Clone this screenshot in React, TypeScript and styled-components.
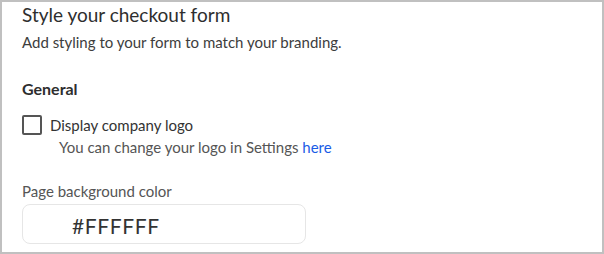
import { createGlobalStyle } from "styled-components";
import styled from "styled-components";

const GlobalStyle = createGlobalStyle`
  html, body {
    margin: 0;
    padding: 0;
    background: #ffffff;
  }
  body {
    font-family: Lato, "Noto Sans", sans-serif;
    color: #333333;
  }
`;

const Panel = styled.section`
  box-sizing: border-box;
  width: 604px;
  height: 254px;
  border: 2px solid #c0c0c0;
  padding: 1px 20px 0;
  background: #ffffff;
  overflow: hidden;
`;

const Title = styled.h1`
  margin: 0;
  font-size: 19px;
  line-height: 24px;
  font-weight: 400;
  color: #2e2e2e;
`;

const Subtitle = styled.p`
  margin: 6px 0 0;
  font-size: 15px;
  line-height: 18px;
  color: #3d3d3d;
`;

const SectionHeading = styled.h2`
  margin: 28px 0 0;
  font-size: 16px;
  line-height: 20px;
  font-weight: 700;
  color: #2e2e2e;
`;

const CheckRow = styled.label`
  display: flex;
  align-items: center;
  gap: 8px;
  margin-top: 16px;
  font-size: 15px;
  line-height: 20px;
  color: #333333;
  cursor: pointer;
`;

const Box = styled.span`
  box-sizing: border-box;
  width: 20px;
  height: 20px;
  border: 2px solid #555555;
  border-radius: 2px;
  flex: none;
`;

const Hint = styled.p`
  margin: 2px 0 0 37px;
  font-size: 15px;
  line-height: 20px;
  color: #555555;
`;

const Link = styled.a`
  color: #1a5ce6;
  text-decoration: none;
`;

const FieldLabel = styled.div`
  margin-top: 25px;
  font-size: 15px;
  line-height: 18px;
  color: #555555;
`;

const ColorInput = styled.div`
  box-sizing: border-box;
  margin-top: 4px;
  width: 284px;
  height: 40px;
  border: 1px solid #e6e6e6;
  border-radius: 8px;
  padding: 3px 0 0 49px;
  display: flex;
  align-items: center;
  font-size: 21px;
  letter-spacing: 0.6px;
  color: #333333;
`;

export default function App() {
  return (
    <>
      <GlobalStyle />
      <Panel>
        <Title>Style your checkout form</Title>
        <Subtitle>Add styling to your form to match your branding.</Subtitle>
        <SectionHeading>General</SectionHeading>
        <CheckRow>
          <Box />
          Display company logo
        </CheckRow>
        <Hint>
          You can change your logo in Settings <Link href="#">here</Link>
        </Hint>
        <FieldLabel>Page background color</FieldLabel>
        <ColorInput>#FFFFFF</ColorInput>
      </Panel>
    </>
  );
}
